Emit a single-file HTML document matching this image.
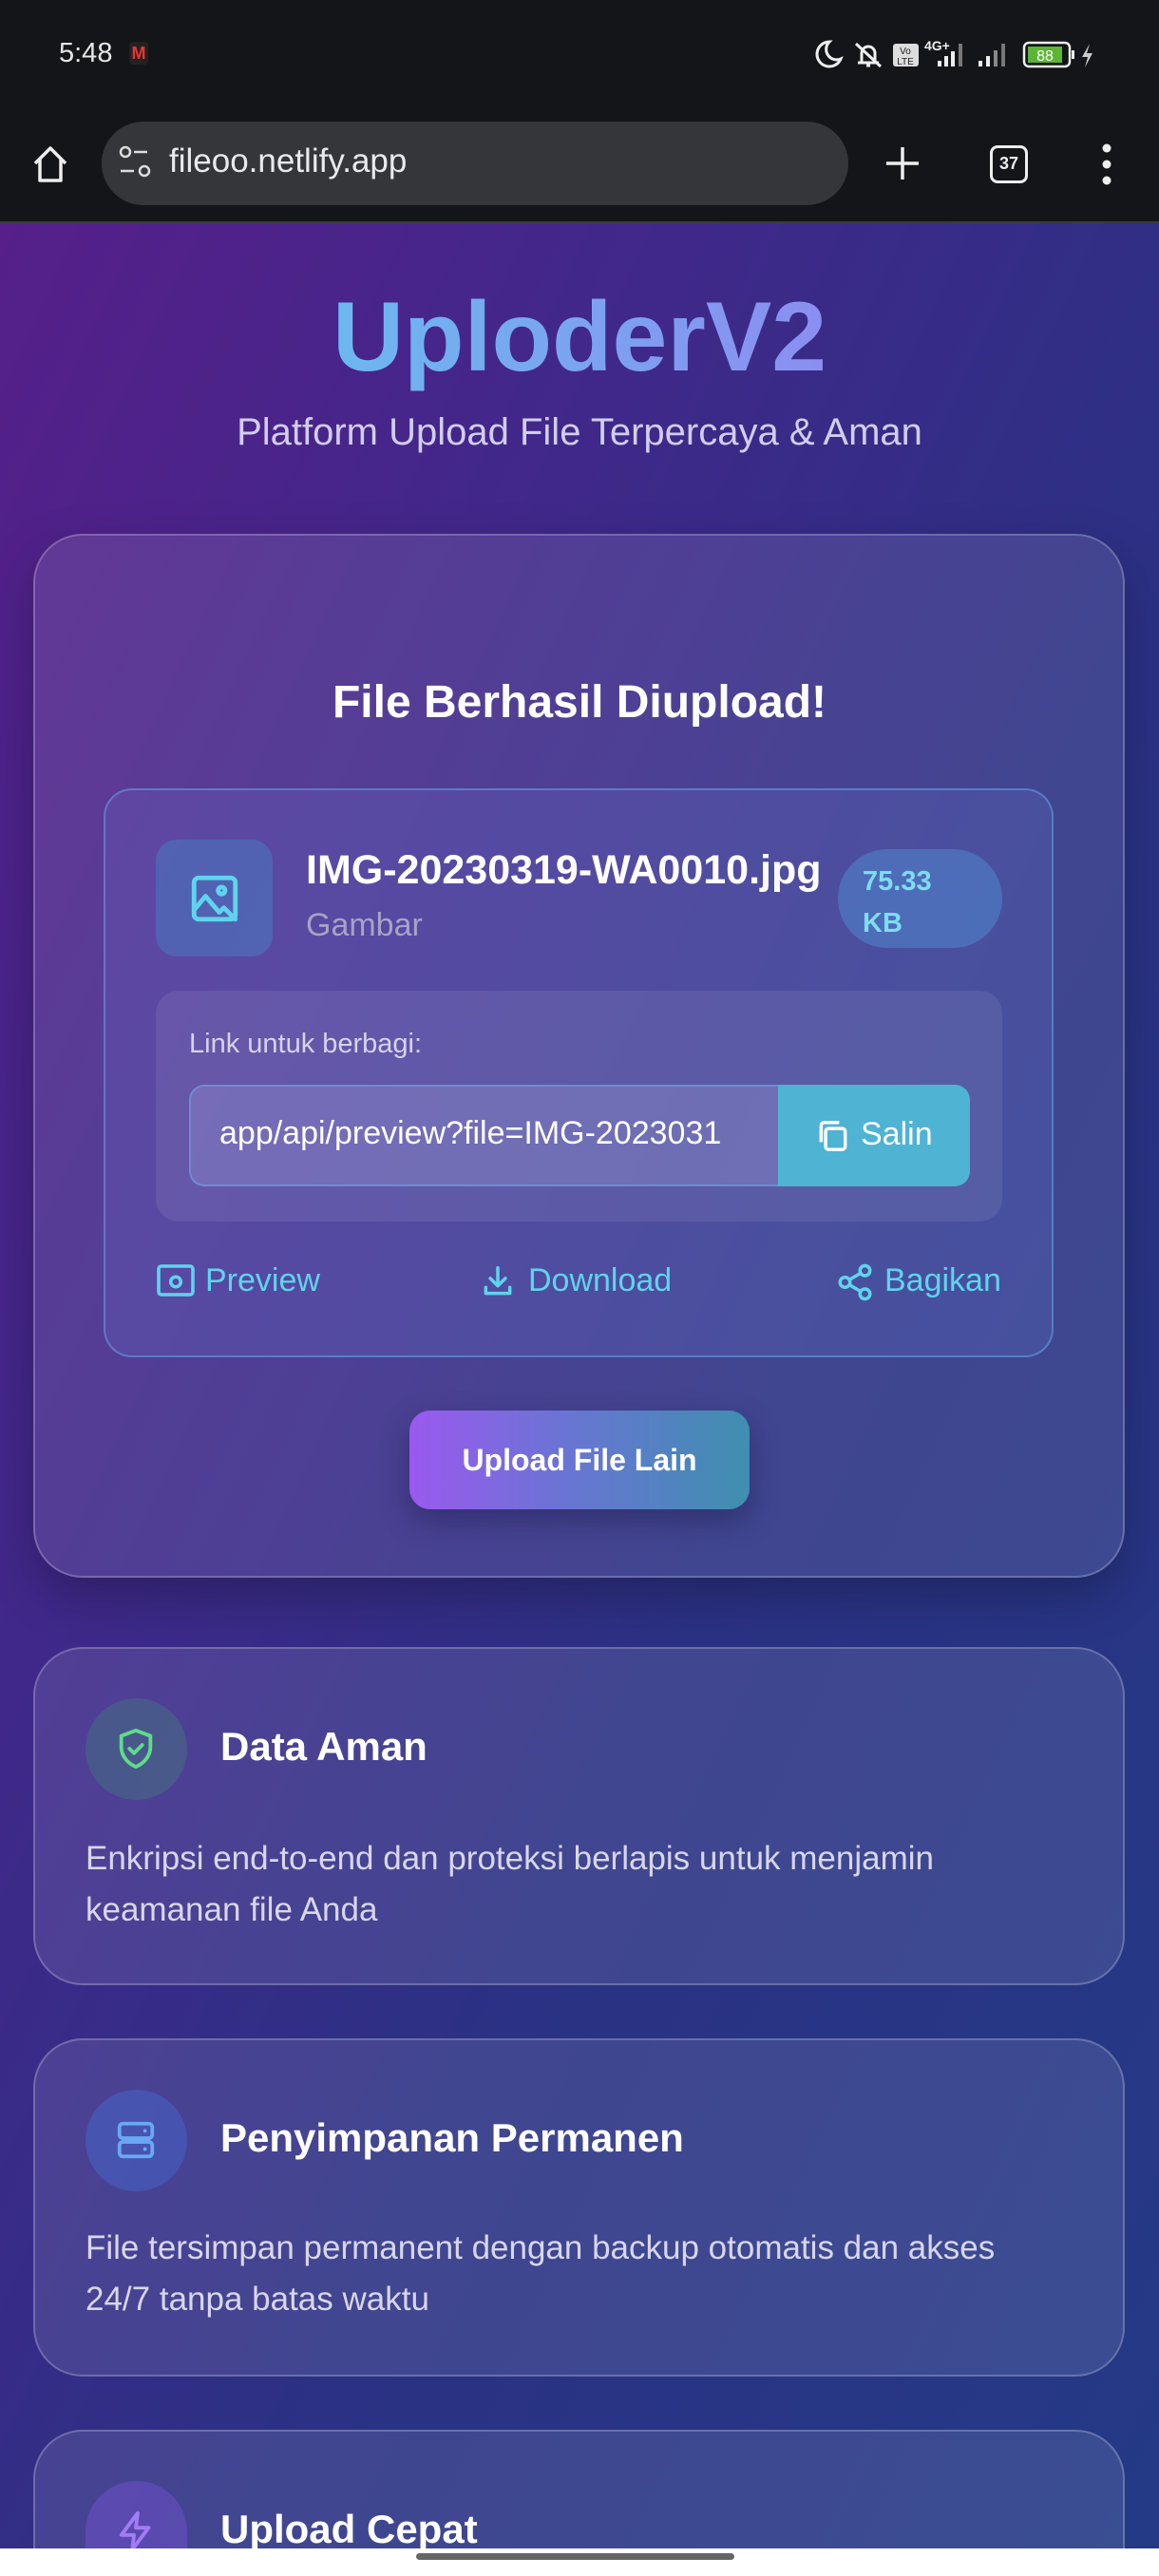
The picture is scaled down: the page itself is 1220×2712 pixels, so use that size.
<!DOCTYPE html>
<html style="width:1220px;height:2712px;overflow:hidden"><head><meta charset="utf-8"><style>
*{box-sizing:border-box;margin:0;padding:0}
body{width:1220px;height:2712px;overflow:hidden;font-family:"Liberation Sans",Roboto,sans-serif;background:#141518;position:relative}
.abs{position:absolute}
.page{position:absolute;left:0;top:233px;width:1220px;height:2450px;background:linear-gradient(115deg,#561f8a 0%,#40288a 30%,#2b3184 60%,#243a86 100%);border-top:2px solid #3a3b40}
.card{position:absolute;left:35px;width:1149px;background:rgba(255,255,255,0.1);border:2px solid rgba(255,255,255,0.22);border-radius:52px}
.ic{position:absolute;border-radius:50%}
.ft{position:absolute;left:232px;color:#fff;font-weight:bold;font-size:42px}
.fd{position:absolute;left:90px;color:#d8d6ec;font-size:35px;line-height:54px}
</style></head><body>
<!-- status bar -->
<div class="abs" style="left:62px;top:40px;color:#e6e6e6;font-size:29px">5:48</div>
<div class="abs" style="left:136px;top:44px;width:20px;height:24px;background:#222;border-radius:4px;color:#e33;font-size:18px;font-weight:bold;text-align:center;line-height:24px">M</div>
<svg class="abs" style="left:855px;top:38px" width="310" height="40" viewBox="0 0 310 40">
<path d="M18 6a13 13 0 1 0 12 18a11 11 0 0 1-12-18z" fill="none" stroke="#eee" stroke-width="3"/>
<path d="M48 28h22M52 28v-10a7 7 0 0 1 14 0v10M57 31h4M46 8l26 24" fill="none" stroke="#eee" stroke-width="3"/>
<rect x="85" y="8" width="27" height="24" rx="3" fill="#ddd"/><text x="98" y="19" font-size="10" text-anchor="middle" fill="#222" font-family="Liberation Sans">Vo</text><text x="98" y="30" font-size="10" text-anchor="middle" fill="#222" font-family="Liberation Sans">LTE</text>
<text x="118" y="15" font-size="14" fill="#eee" font-weight="bold" font-family="Liberation Sans">4G+</text>
<rect x="132" y="26" width="4" height="6" fill="#eee"/><rect x="139" y="21" width="4" height="11" fill="#eee"/><rect x="146" y="16" width="4" height="16" fill="#eee"/><rect x="154" y="8" width="4" height="24" fill="#777"/>
<rect x="175" y="26" width="4" height="6" fill="#eee"/><rect x="183" y="21" width="4" height="11" fill="#eee"/><rect x="191" y="15" width="4" height="17" fill="#888"/><rect x="199" y="8" width="4" height="24" fill="#777"/>
<rect x="223" y="7" width="48" height="25" rx="5" fill="none" stroke="#eee" stroke-width="2.5"/><rect x="227" y="11" width="36" height="17" fill="#5db536"/><text x="245" y="26" font-size="16" text-anchor="middle" fill="#fff" font-family="Liberation Sans">88</text><rect x="273" y="15" width="3" height="9" fill="#eee"/>
<path d="M292 8l-8 14h6l-3 11 8-15h-6z" fill="#ccc"/>
</svg>
<!-- browser bar -->
<svg class="abs" style="left:33px;top:152px" width="40" height="42" viewBox="0 0 40 42"><path d="M4 20L20 4l16 16M9 16v22h22V16" fill="none" stroke="#eee" stroke-width="3.5" stroke-linejoin="round"/></svg>
<div class="abs" style="left:107px;top:128px;width:786px;height:88px;background:#35363a;border-radius:44px"></div>
<svg class="abs" style="left:124px;top:152px" width="36" height="40" viewBox="0 0 36 40"><circle cx="8" cy="8" r="5" fill="none" stroke="#ddd" stroke-width="2.5"/><path d="M17 8h14M3 28h14" stroke="#ddd" stroke-width="2.5"/><circle cx="28" cy="28" r="5" fill="none" stroke="#ddd" stroke-width="2.5"/></svg>
<div class="abs" style="left:178px;top:150px;color:#e8eaed;font-size:35px">fileoo.netlify.app</div>
<svg class="abs" style="left:930px;top:152px" width="40" height="40"><path d="M20 3v34M3 20h34" stroke="#eee" stroke-width="3.5"/></svg>
<div class="abs" style="left:1042px;top:153px;width:40px;height:40px;border:3.5px solid #eee;border-radius:8px;color:#eee;font-size:18px;font-weight:bold;text-align:center;line-height:33px">37</div>
<svg class="abs" style="left:1157px;top:150px" width="16" height="46"><circle cx="8" cy="6" r="4.5" fill="#eee"/><circle cx="8" cy="23" r="4.5" fill="#eee"/><circle cx="8" cy="40" r="4.5" fill="#eee"/></svg>

<div class="page"></div>
<!-- header -->
<div class="abs" style="left:0;top:290px;width:1220px;text-align:center;font-size:104px;font-weight:bold;line-height:130px"><span style="background:linear-gradient(90deg,#6cb8f0,#8a8ef0);-webkit-background-clip:text;color:transparent">UploderV2</span></div>
<div class="abs" style="left:0;top:433px;width:1220px;text-align:center;font-size:40px;color:#d2cdee">Platform Upload File Terpercaya &amp; Aman</div>

<!-- main card -->
<div class="card" style="top:562px;height:1099px;box-shadow:0 20px 50px rgba(0,0,0,0.25)"></div>
<div class="abs" style="left:0;top:712px;width:1220px;text-align:center;color:#fff;font-size:48px;font-weight:bold">File Berhasil Diupload!</div>
<div class="abs" style="left:109px;top:830px;width:1000px;height:599px;background:rgba(110,130,220,0.18);border:2px solid rgba(100,160,230,0.55);border-radius:30px"></div>
<div class="abs" style="left:164px;top:884px;width:123px;height:123px;background:rgba(70,130,200,0.45);border-radius:22px"></div>
<svg class="abs" style="left:197px;top:917px" width="58" height="58" viewBox="0 0 24 24" fill="none" stroke="#5fd4ec" stroke-width="2" stroke-linecap="round" stroke-linejoin="round"><rect x="3" y="3" width="18" height="18" rx="2"/><circle cx="15" cy="8.5" r="1.5"/><path d="M3 17l5-6 6 7 2-2 5 5"/></svg>
<div class="abs" style="left:322px;top:892px;color:#fff;font-size:43px;font-weight:bold;white-space:nowrap">IMG-20230319-WA0010.jpg</div>
<div class="abs" style="left:322px;top:955px;color:#a6a3c6;font-size:34px">Gambar</div>
<div class="abs" style="left:882px;top:894px;width:173px;height:104px;background:rgba(80,140,210,0.5);border-radius:52px;color:#7fdcf2;font-size:29px;font-weight:bold;padding:12px 0 0 26px;line-height:44px">75.33<br>KB</div>
<div class="abs" style="left:164px;top:1043px;width:891px;height:243px;background:rgba(255,255,255,0.08);border-radius:24px"></div>
<div class="abs" style="left:199px;top:1083px;color:#d6d3ec;font-size:29px">Link untuk berbagi:</div>
<div class="abs" style="left:199px;top:1142px;width:622px;height:107px;background:rgba(150,150,210,0.35);border:2px solid rgba(110,160,230,0.6);border-radius:16px 0 0 16px;overflow:hidden"><div style="position:absolute;left:30px;top:30px;color:#fff;font-size:34px;white-space:nowrap">app/api/preview?file=IMG-2023031</div></div>
<div class="abs" style="left:819px;top:1142px;width:202px;height:107px;background:#4fb3d3;border-radius:0 16px 16px 0"></div>
<svg class="abs" style="left:858px;top:1176px" width="38" height="40" viewBox="0 0 24 24" fill="none" stroke="#fff" stroke-width="2.2"><rect x="7" y="7" width="13" height="14" rx="2"/><path d="M4 16V5a2 2 0 0 1 2-2h10"/></svg>
<div class="abs" style="left:906px;top:1175px;color:#fff;font-size:34px">Salin</div>
<svg class="abs" style="left:164px;top:1330px" width="42" height="36" viewBox="0 0 28 24" fill="none" stroke="#5fd4ec" stroke-width="2.4"><rect x="2" y="2" width="24" height="20" rx="2"/><circle cx="14" cy="13" r="3.5"/></svg>
<div class="abs" style="left:216px;top:1329px;color:#5fd4ec;font-size:34px">Preview</div>
<svg class="abs" style="left:505px;top:1330px" width="38" height="38" viewBox="0 0 24 24" fill="none" stroke="#5fd4ec" stroke-width="2.2" stroke-linecap="round" stroke-linejoin="round"><path d="M12 3v12M7 10l5 5 5-5M4 16v4h16v-4"/></svg>
<div class="abs" style="left:556px;top:1329px;color:#5fd4ec;font-size:34px">Download</div>
<svg class="abs" style="left:879px;top:1329px" width="42" height="42" viewBox="0 0 24 24" fill="none" stroke="#5fd4ec" stroke-width="2"><circle cx="18" cy="5" r="3"/><circle cx="6" cy="12" r="3"/><circle cx="18" cy="19" r="3"/><path d="M8.6 13.5l6.8 4M15.4 6.5l-6.8 4"/></svg>
<div class="abs" style="left:931px;top:1329px;color:#5fd4ec;font-size:34px">Bagikan</div>
<div class="abs" style="left:431px;top:1485px;width:358px;height:104px;background:linear-gradient(90deg,#9b59ef,#6a74d4 45%,#3f8fb0);border-radius:22px;box-shadow:0 12px 30px rgba(20,20,60,0.4);color:#fff;font-size:32px;font-weight:bold;text-align:center;line-height:104px">Upload File Lain</div>

<!-- feature 1 -->
<div class="card" style="top:1734px;height:356px"></div>
<div class="ic" style="left:90px;top:1788px;width:107px;height:107px;background:rgba(70,110,130,0.55)"></div>
<svg class="abs" style="left:120px;top:1818px" width="46" height="46" viewBox="0 0 24 24" fill="none" stroke="#5edb8a" stroke-width="2" stroke-linecap="round" stroke-linejoin="round"><path d="M12 2l8 3v6c0 5-3.5 9-8 11-4.5-2-8-6-8-11V5z"/><path d="M8.5 12l2.5 2.5 4.5-4.5"/></svg>
<div class="ft" style="top:1815px">Data Aman</div>
<div class="fd" style="top:1930px">Enkripsi end-to-end dan proteksi berlapis untuk menjamin<br>keamanan file Anda</div>

<!-- feature 2 -->
<div class="card" style="top:2146px;height:356px"></div>
<div class="ic" style="left:90px;top:2200px;width:107px;height:107px;background:rgba(70,100,200,0.55)"></div>
<svg class="abs" style="left:120px;top:2230px" width="46" height="46" viewBox="0 0 24 24" fill="none" stroke="#6aa8f5" stroke-width="2" stroke-linecap="round"><rect x="3" y="3" width="18" height="8" rx="2"/><rect x="3" y="13" width="18" height="8" rx="2"/><path d="M17 7h.01M17 17h.01"/></svg>
<div class="ft" style="top:2227px">Penyimpanan Permanen</div>
<div class="fd" style="top:2340px">File tersimpan permanent dengan backup otomatis dan akses<br>24/7 tanpa batas waktu</div>

<!-- feature 3 -->
<div class="card" style="top:2558px;height:154px;border-bottom:none;border-radius:52px 52px 0 0"></div>
<div class="ic" style="left:90px;top:2612px;width:107px;height:100px;border-radius:54px 54px 0 0;background:rgba(110,80,200,0.55)"></div>
<svg class="abs" style="left:120px;top:2642px" width="46" height="46" viewBox="0 0 24 24" fill="none" stroke="#a27cf5" stroke-width="2" stroke-linejoin="round"><path d="M13 2L4 14h7l-1 8 9-12h-7z"/></svg>
<div class="ft" style="top:2639px">Upload Cepat</div>

<!-- nav bar -->
<div class="abs" style="left:0;top:2683px;width:1220px;height:29px;background:#fff"></div>
<div class="abs" style="left:438px;top:2688px;width:335px;height:7px;background:#666;border-radius:4px"></div>
</body></html>
